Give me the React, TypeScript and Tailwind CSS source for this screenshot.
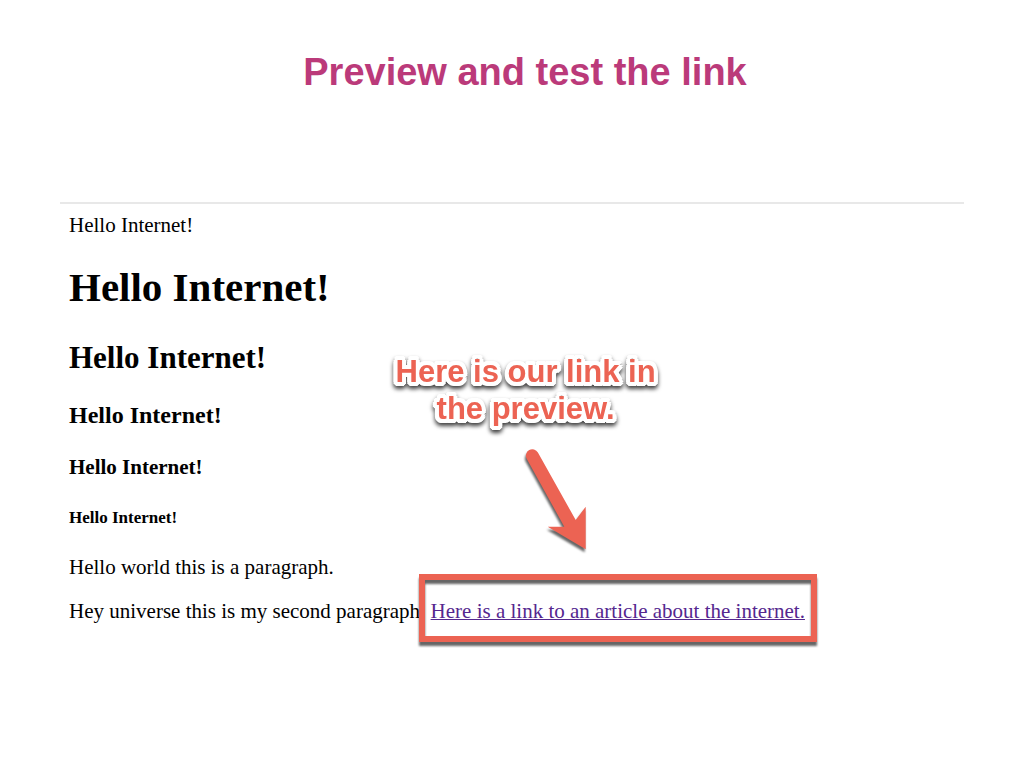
function Callout() {
  return (
    <span className="absolute bottom-[66px] left-[-40px] flex w-[270px] flex-col items-center">
      <span className="text-center font-['Liberation_Sans',Arial,sans-serif] text-[31px] leading-[37px] font-bold whitespace-nowrap text-[#ec6353] [filter:drop-shadow(0_3px_2px_rgb(0_0_0/0.75))] [text-shadow:4px_0_white,-4px_0_white,0_4px_white,0_-4px_white,3px_3px_white,-3px_3px_white,3px_-3px_white,-3px_-3px_white,4px_2px_white,-4px_2px_white,2px_4px_white,-2px_4px_white,2px_-4px_white,-2px_-4px_white]">
        Here is our link in
        <br />
        the preview.
      </span>
      <svg
        className="mt-[18px] ml-[60px] h-[112px] w-[72px] [filter:drop-shadow(-1px_3px_1px_rgb(0_0_0/0.6))]"
        viewBox="0 0 72 112"
        fill="#ec6353"
        aria-hidden="true"
      >
        <path d="M6.7 13.8A6.4 6.4 0 0 1 17.9 7.6L55.7 75L65.7 61.7V104.3L27.7 81.7H44.3Z" />
      </svg>
    </span>
  );
}

export default function App() {
  return (
    <main className="min-h-screen bg-white pt-[50px] pb-12 font-['Liberation_Serif','Times_New_Roman',serif] text-black">
      <h1 className="pl-[26px] text-center font-['Liberation_Sans',Arial,sans-serif] text-[38px] leading-[44px] font-bold text-[#bb3a7a]">
        Preview and test the link
      </h1>
      <article className="mx-[60px] mt-[108px] border-t-2 border-[#e8e8e8] px-[9px] pt-[9px] text-[21px] leading-[24px]">
        <p>Hello Internet!</p>
        <h1 className="mt-[26px] text-[41px] leading-[48px] font-bold">Hello Internet!</h1>
        <h2 className="mt-[28px] text-[31px] leading-[38px] font-bold">Hello Internet!</h2>
        <h3 className="mt-[24px] text-[24px] leading-[28px] font-bold">Hello Internet!</h3>
        <h4 className="mt-[26px] text-[21px] leading-[24px] font-bold">Hello Internet!</h4>
        <h5 className="mt-[28px] text-[17px] leading-[22px] font-bold">Hello Internet!</h5>
        <p className="mt-[26px]">Hello world this is a paragraph.</p>
        <p className="mt-[20px] whitespace-nowrap">
          Hey universe this is my second paragraph.{" "}
          <span className="relative inline-block">
            <a href="#article" className="text-[#55278f] underline decoration-1 underline-offset-1">
              Here is a link to an article about the internet.
            </a>
            <span className="pointer-events-none absolute -top-[25px] -right-[12px] -bottom-[19px] -left-[12px] border-[6px] border-[#ec6353] [filter:drop-shadow(0_4px_1px_rgb(0_0_0/0.6))]" />
            <Callout />
          </span>
        </p>
      </article>
    </main>
  );
}
